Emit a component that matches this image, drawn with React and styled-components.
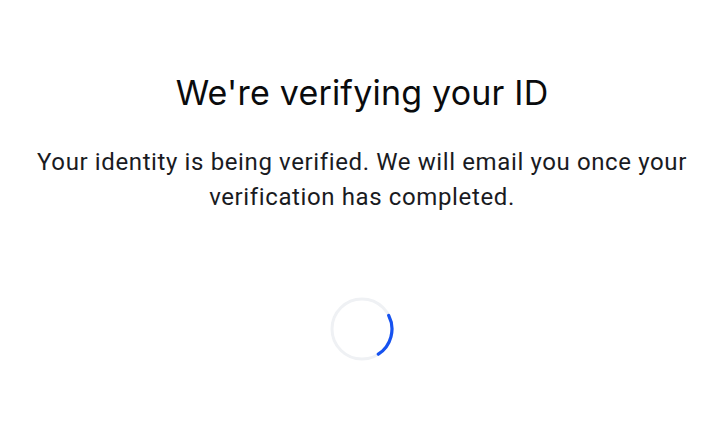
import React from "react";
import styled, { createGlobalStyle } from "styled-components";

const GlobalStyle = createGlobalStyle`
  html, body {
    margin: 0;
    padding: 0;
    background: #ffffff;
  }
`;

const Page = styled.div`
  width: 724px;
  height: 427px;
  display: flex;
  flex-direction: column;
  align-items: center;
  padding-top: 69px;
  box-sizing: border-box;
  background: #ffffff;
`;

const Title = styled.h1`
  margin: 0;
  font-family: Inter, "Open Sans", sans-serif;
  font-weight: 400;
  font-size: 34px;
  line-height: 48px;
  color: #0a0b0d;
  letter-spacing: 0.2px;
`;

const Message = styled.p`
  margin: 28px 0 0;
  width: 690px;
  text-align: center;
  font-family: Roboto, "Liberation Sans", sans-serif;
  font-size: 24px;
  letter-spacing: 0.62px;
  line-height: 35px;
  color: #1a1b1f;
`;

const SpinnerWrap = styled.div`
  margin-top: 81px;
  width: 66px;
  height: 66px;
`;

function Spinner() {
  // track ring plus a short blue arc on the right
  return (
    <SpinnerWrap>
      <svg width="66" height="66" viewBox="0 0 66 66">
        <circle cx="33" cy="33" r="30" fill="none" stroke="#eff1f4" strokeWidth="3" />
        <path
          d="M 59.7 19.4 A 30 30 0 0 1 49.3 58.2"
          fill="none"
          stroke="#1652f0"
          strokeWidth="3.2"
          strokeLinecap="round"
        />
      </svg>
    </SpinnerWrap>
  );
}

export default function App() {
  return (
    <>
      <GlobalStyle />
      <Page>
        <Title>We're verifying your ID</Title>
        <Message>
          Your identity is being verified. We will email you once your verification has completed.
        </Message>
        <Spinner />
      </Page>
    </>
  );
}
